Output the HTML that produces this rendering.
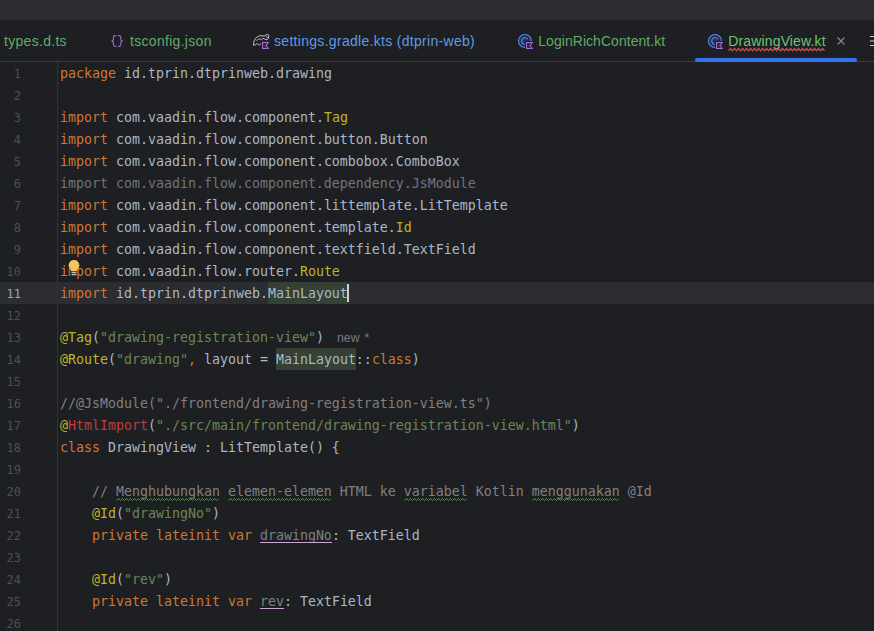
<!DOCTYPE html>
<html><head><meta charset="utf-8">
<style>
html,body{margin:0;padding:0;}
body{width:874px;height:631px;overflow:hidden;background:#1e1f22;position:relative;font-family:"Liberation Sans",sans-serif;}
#top{position:absolute;left:0;top:0;width:874px;height:20px;background:#2b2d30;}
#tabline{position:absolute;left:0;top:61px;width:874px;height:1px;background:#393b40;}
.tab{position:absolute;top:20px;height:41px;line-height:43px;font-size:14px;letter-spacing:0.3px;color:#5fad65;white-space:nowrap;}
.tab.blue{color:#5c9ce6;}
.tab.act{color:#6cc474;}
#uline{position:absolute;left:695px;top:58px;width:162px;height:4px;background:#3574f0;border-radius:2px;}
#gutline{position:absolute;left:57px;top:62px;width:1px;height:570px;background:#313438;}
#curline{position:absolute;left:0;top:282px;width:874px;height:22px;background:#2c2d31;}
pre{margin:0;font-family:"DejaVu Sans Mono","Liberation Mono",monospace;font-size:13.29px;line-height:22px;}
#nums{position:absolute;left:0;top:63px;width:21px;text-align:right;color:#4b5059;font-size:12px;}
#nums .cur{color:#a1a3ab;}
#code{position:absolute;left:60px;top:63px;color:#a9b7c6;}
.k{color:#cc7832;}
.a{color:#bbb529;}
.s{color:#6a8759;}
.c{color:#808080;}
.g{color:#72737a;}
.r{color:#bc3f3c;}
.v{color:#7c8088;}
.hlbox{position:absolute;height:22px;width:80px;background:#344134;}
.hint{font-family:"Liberation Sans",sans-serif;font-size:12.3px;color:#7a7e85;word-spacing:1.6px;}
#caret{position:absolute;left:347px;top:284px;width:2px;height:18px;background:#ced0d6;}
svg{position:absolute;left:0;top:0;}
</style></head><body>
<div id="top"></div>
<div class="tab" style="left:4px">types.d.ts</div>
<div class="tab" style="left:130px">tsconfig.json</div>
<div class="tab blue" style="left:274px">settings.gradle.kts (dtprin-web)</div>
<div class="tab" style="left:538.3px;letter-spacing:0.04px">LoginRichContent.kt</div>
<div class="tab act" style="left:728.3px;letter-spacing:0.14px">DrawingView.kt</div>
<div id="tabline"></div>
<div id="uline"></div>
<div id="curline"></div>
<div id="gutline"></div>
<div class="hlbox" style="left:268px;top:282px"></div>
<div class="hlbox" style="left:276px;top:348px"></div>
<pre id="nums">1
2
3
4
5
6
7
8
9
10
<span class="cur">11</span>
12
13
14
15
16
17
18
19
20
21
22
23
24
25
26</pre>
<pre id="code"><span class="k">package</span> id.tprin.dtprinweb.drawing

<span class="k">import</span> com.vaadin.flow.component.<span class="a">Tag</span>
<span class="k">import</span> com.vaadin.flow.component.button.Button
<span class="k">import</span> com.vaadin.flow.component.combobox.ComboBox
<span class="g">import com.vaadin.flow.component.dependency.JsModule</span>
<span class="k">import</span> com.vaadin.flow.component.littemplate.LitTemplate
<span class="k">import</span> com.vaadin.flow.component.template.<span class="a">Id</span>
<span class="k">import</span> com.vaadin.flow.component.textfield.TextField
<span class="k">import</span> com.vaadin.flow.router.<span class="a">Route</span>
<span class="k">import</span> id.tprin.dtprinweb.MainLayout

<span class="a">@Tag</span>(<span class="s">"drawing-registration-view"</span>)
<span class="a">@Route</span>(<span class="s">"drawing"</span><span class="k">,</span> layout = MainLayout::<span class="k">class</span>)

<span class="c">//@JsModule("./frontend/drawing-registration-view.ts")</span>
<span class="a">@</span><span class="r">HtmlImport</span>(<span class="s">"./src/main/frontend/drawing-registration-view.html"</span>)
<span class="k">class</span> DrawingView : LitTemplate() {

    <span class="c">// Menghubungkan elemen-elemen HTML ke variabel Kotlin menggunakan @Id</span>
    <span class="a">@Id</span>(<span class="s">"drawingNo"</span>)
    <span class="k">private lateinit var</span> <span class="v">drawingNo</span>: TextField

    <span class="a">@Id</span>(<span class="s">"rev"</span>)
    <span class="k">private lateinit var</span> <span class="v">rev</span>: TextField
</pre>
<div class="hint" style="position:absolute;left:337px;top:330px;line-height:16px">new *</div>
<div id="caret"></div>
<svg width="874" height="631" viewBox="0 0 874 631" fill="none">
<!-- wavy underlines -->
<g stroke="#57995c" stroke-width="0.95"><polyline points="116.5,500.5 118.5,498.5 120.5,500.5 122.5,498.5 124.5,500.5 126.5,498.5 128.5,500.5 130.5,498.5 132.5,500.5 134.5,498.5 136.5,500.5 138.5,498.5 140.5,500.5 142.5,498.5 144.5,500.5 146.5,498.5 148.5,500.5 150.5,498.5 152.5,500.5 154.5,498.5 156.5,500.5 158.5,498.5 160.5,500.5 162.5,498.5 164.5,500.5 166.5,498.5 168.5,500.5 170.5,498.5 172.5,500.5 174.5,498.5 176.5,500.5 178.5,498.5 180.5,500.5 182.5,498.5 184.5,500.5 186.5,498.5 188.5,500.5 190.5,498.5 192.5,500.5 194.5,498.5 196.5,500.5 198.5,498.5 200.5,500.5 202.5,498.5 204.5,500.5 206.5,498.5 208.5,500.5 210.5,498.5 212.5,500.5 214.5,498.5 216.5,500.5 218.5,498.5"/><polyline points="228.5,500.5 230.5,498.5 232.5,500.5 234.5,498.5 236.5,500.5 238.5,498.5 240.5,500.5 242.5,498.5 244.5,500.5 246.5,498.5 248.5,500.5 250.5,498.5 252.5,500.5 254.5,498.5 256.5,500.5 258.5,498.5 260.5,500.5 262.5,498.5 264.5,500.5 266.5,498.5 268.5,500.5 270.5,498.5 272.5,500.5 274.5,498.5 276.5,500.5 278.5,498.5 280.5,500.5 282.5,498.5 284.5,500.5 286.5,498.5 288.5,500.5 290.5,498.5 292.5,500.5 294.5,498.5 296.5,500.5 298.5,498.5 300.5,500.5 302.5,498.5 304.5,500.5 306.5,498.5 308.5,500.5 310.5,498.5 312.5,500.5 314.5,498.5 316.5,500.5 318.5,498.5 320.5,500.5 322.5,498.5 324.5,500.5 326.5,498.5 328.5,500.5 330.5,498.5"/><polyline points="404.5,500.5 406.5,498.5 408.5,500.5 410.5,498.5 412.5,500.5 414.5,498.5 416.5,500.5 418.5,498.5 420.5,500.5 422.5,498.5 424.5,500.5 426.5,498.5 428.5,500.5 430.5,498.5 432.5,500.5 434.5,498.5 436.5,500.5 438.5,498.5 440.5,500.5 442.5,498.5 444.5,500.5 446.5,498.5 448.5,500.5 450.5,498.5 452.5,500.5 454.5,498.5 456.5,500.5 458.5,498.5 460.5,500.5 462.5,498.5 464.5,500.5 466.5,498.5"/><polyline points="532.5,500.5 534.5,498.5 536.5,500.5 538.5,498.5 540.5,500.5 542.5,498.5 544.5,500.5 546.5,498.5 548.5,500.5 550.5,498.5 552.5,500.5 554.5,498.5 556.5,500.5 558.5,498.5 560.5,500.5 562.5,498.5 564.5,500.5 566.5,498.5 568.5,500.5 570.5,498.5 572.5,500.5 574.5,498.5 576.5,500.5 578.5,498.5 580.5,500.5 582.5,498.5 584.5,500.5 586.5,498.5 588.5,500.5 590.5,498.5 592.5,500.5 594.5,498.5 596.5,500.5 598.5,498.5 600.5,500.5 602.5,498.5 604.5,500.5 606.5,498.5 608.5,500.5 610.5,498.5 612.5,500.5 614.5,498.5 616.5,500.5 618.5,498.5"/></g>
<g stroke="#d2555f" stroke-width="1.1"><polyline points="728.5,50.9 730.5,48.4 732.5,50.9 734.5,48.4 736.5,50.9 738.5,48.4 740.5,50.9 742.5,48.4 744.5,50.9 746.5,48.4 748.5,50.9 750.5,48.4 752.5,50.9 754.5,48.4 756.5,50.9 758.5,48.4 760.5,50.9 762.5,48.4 764.5,50.9 766.5,48.4 768.5,50.9 770.5,48.4 772.5,50.9 774.5,48.4 776.5,50.9 778.5,48.4 780.5,50.9 782.5,48.4 784.5,50.9 786.5,48.4 788.5,50.9 790.5,48.4 792.5,50.9 794.5,48.4 796.5,50.9 798.5,48.4 800.5,50.9 802.5,48.4 804.5,50.9 806.5,48.4 808.5,50.9 810.5,48.4 812.5,50.9 814.5,48.4 816.5,50.9 818.5,48.4 820.5,50.9 822.5,48.4 824.5,50.9"/></g>
<!-- property underlines -->
<rect x="260" y="542" width="72" height="1" fill="#c8a5d3"/>
<rect x="260" y="608" width="24" height="1" fill="#c8a5d3"/>
<!-- close x -->
<path d="M837.500 37.500L844.500 44.500M844.500 37.500L837.500 44.500" stroke="#868a91" stroke-width="1.1"/>
<!-- tab list icon -->
<path d="M870 36.500H874M870 41H874M870 45.500H874" stroke="#ced0d6" stroke-width="1.2"/>
<!-- json braces -->
<path d="M116.300 35.600H115.300Q113.400 35.600 113.400 37.500V39.600Q113.400 41 111.300 41Q113.400 41 113.400 42.400V44.500Q113.400 46.400 115.300 46.400H116.300M117.900 35.600H118.900Q120.800 35.600 120.800 37.500V39.600Q120.800 41 122.900 41Q120.800 41 120.800 42.400V44.500Q120.800 46.400 118.900 46.400H117.900" stroke="#9d6fc8" stroke-width="1.1"/>
<!-- gradle elephant -->
<path d="M253.600 45C253.300 41.500 254.800 38.300 257.500 36.700C259.800 35.400 262.500 35.500 264.800 36.100C265.500 34.800 266.800 34.100 268 34.400C268.900 34.800 269 36.800 268.500 38.200C268.100 39.400 267.300 40 266.300 39.700M266.300 36.600C267 36.300 267.700 36.900 267.400 37.800M262.500 38.300C263.800 38.600 265.200 39.200 266.300 39.700M256.800 40.300C257.800 38.800 260.600 38.300 262 39.900M253.600 45C254.600 45.500 255.600 45.100 256 44.300C256.400 43.400 257.500 43.400 257.900 44.300C258.300 45.200 259.600 45.300 260.100 44.400C260.300 44 260.600 43.600 260.900 43.300" stroke="#c3c5cb" stroke-width="1" stroke-linecap="round" stroke-linejoin="round"/>
<!-- kotlin flags -->
<g id="kf1"><rect x="261" y="41" width="9" height="9" fill="#1e1f22"/><path d="M262.500 42.500H268.200L266 45.500L268.200 48.500H262.500Z" fill="#2f2936" stroke="#a56fcf" stroke-width="1.1"/></g>
<!-- class icons -->
<g><circle cx="525" cy="41" r="6.500" fill="#25324d" stroke="#548af7" stroke-width="1.100"/><path d="M527.800 39.200C527.200 38.200 526.200 37.700 525 37.700C523.200 37.700 521.800 39.100 521.800 41C521.800 42.900 523.200 44.300 525 44.300C526.200 44.300 527.200 43.800 527.800 42.800" stroke="#548af7" stroke-width="1.100"/><rect x="525" y="41" width="9" height="9" fill="#1e1f22"/><path d="M526.500 42.500H532.200L530 45.500L532.200 48.500H526.500Z" fill="#2f2936" stroke="#a56fcf" stroke-width="1.100"/></g>
<g transform="translate(190 0)"><circle cx="525" cy="41" r="6.500" fill="#25324d" stroke="#548af7" stroke-width="1.100"/><path d="M527.800 39.200C527.200 38.200 526.200 37.700 525 37.700C523.200 37.700 521.800 39.100 521.800 41C521.800 42.900 523.200 44.300 525 44.300C526.200 44.300 527.200 43.800 527.800 42.800" stroke="#548af7" stroke-width="1.100"/><rect x="525" y="41" width="9" height="9" fill="#1e1f22"/><path d="M526.500 42.500H532.200L530 45.500L532.200 48.500H526.500Z" fill="#2f2936" stroke="#a56fcf" stroke-width="1.100"/></g>
<!-- bulb -->
<path d="M74 260A5.300 5.300 0 0 1 77.600 269.200L76.600 271.500H71.400L70.400 269.200A5.300 5.300 0 0 1 74 260Z" fill="#f2c55c"/>
<rect x="71" y="271.500" width="6" height="4.500" fill="#1e1f22"/><rect x="71.500" y="272.200" width="5" height="1" fill="#e8e8e8"/><rect x="71.500" y="274.200" width="5" height="1" fill="#e8e8e8"/>
</svg>
</body></html>
